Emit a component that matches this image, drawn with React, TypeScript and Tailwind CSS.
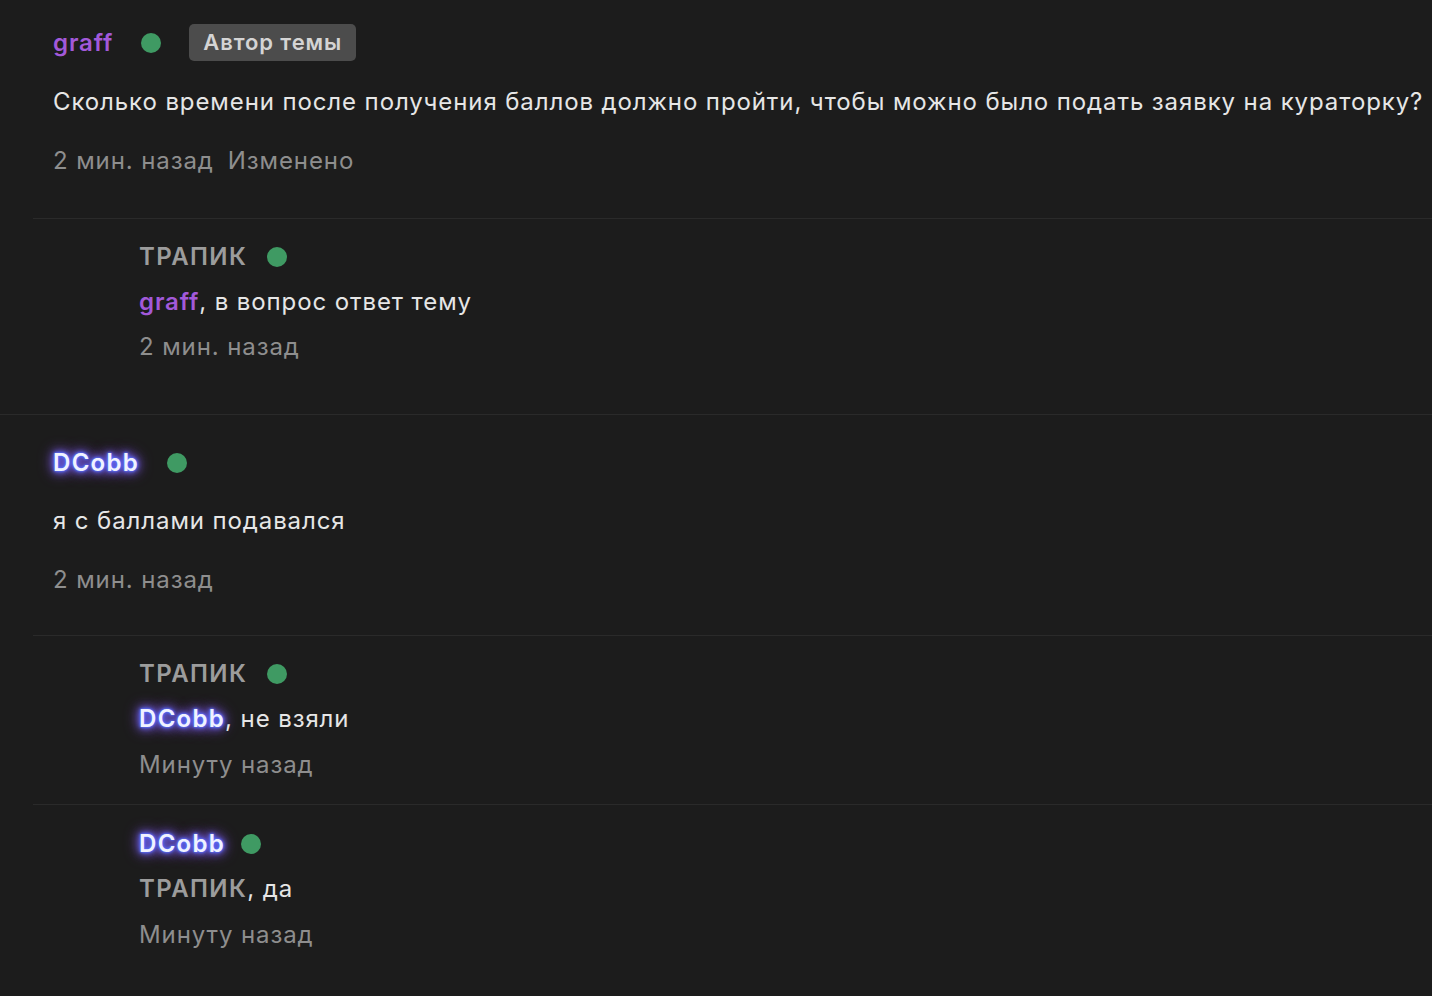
import React from "react";

const glow =
  "tracking-[1.3px] text-[#f0f2ff] [text-shadow:0_0_2px_#5870ff,0_0_3px_#5870ff,0_0_5px_#5b6cff,0_0_8px_#6a64ff,0_0_12px_#8a5cf0,0_0_16px_#9a5cf0]";

function Dot() {
  return <span className="inline-block h-5 w-5 rounded-full bg-[#3f9a63]" />;
}

function Cobb() {
  return <span className={`font-semibold ${glow}`}>DCobb</span>;
}

function Trapik() {
  return <span className="font-semibold tracking-[1.4px] text-[#9c9c9c]">ТРАПИК</span>;
}

export default function App() {
  return (
    <div
      className="min-h-[996px] w-full overflow-hidden bg-[#1c1c1c] text-[24px] tracking-[0.9px] text-[#e6e6e6]"
      style={{ fontFamily: "Inter, 'Noto Sans', sans-serif" }}
    >
      {/* post 1 */}
      <div className="pl-[33px]">
        <div className="border-b border-[#2a2a2a] pl-5 pt-[25px] pb-[41px]">
          <div className="flex h-[35px] items-center">
            <span className="font-semibold text-[#a259d9]">graff</span>
            <span className="ml-7 flex"><Dot /></span>
            <span className="ml-7 rounded-[5px] bg-[#4c4c4c] px-[14px] py-[2px] text-[22px] font-semibold text-[#d4d4d4]">
              Автор темы
            </span>
          </div>
          <div className="mt-[26px] whitespace-nowrap leading-[32px]">
            Сколько времени после получения баллов должно пройти, чтобы можно было подать заявку на кураторку?
          </div>
          <div className="mt-[27px] flex gap-[14px] leading-[32px] text-[#8e8e8e]">
            <span>2 мин. назад</span>
            <span>Изменено</span>
          </div>
        </div>
      </div>
      {/* reply 1 */}
      <div className="border-b border-[#2a2a2a] pl-[139px] pt-[22px] pb-[51px]">
        <div className="flex h-[32px] items-center gap-5">
          <Trapik />
          <Dot />
        </div>
        <div className="mt-[13px] leading-[32px]">
          <span className="font-semibold text-[#a259d9]">graff</span>, в вопрос ответ тему
        </div>
        <div className="mt-[13px] leading-[32px] text-[#8e8e8e]">2 мин. назад</div>
      </div>
      {/* post 2 */}
      <div className="pl-[33px]">
        <div className="border-b border-[#2a2a2a] pl-5 pt-[32px] pb-[39px]">
          <div className="flex h-[32px] items-center">
            <Cobb />
            <span className="ml-7 flex"><Dot /></span>
          </div>
          <div className="mt-[26px] leading-[32px]">я с баллами подавался</div>
          <div className="mt-[27px] leading-[32px] text-[#8e8e8e]">2 мин. назад</div>
        </div>
      </div>
      {/* reply 2 */}
      <div className="pl-[33px]">
        <div className="border-b border-[#2a2a2a] pl-[106px] pt-[22px] pb-[23px]">
          <div className="flex h-[32px] items-center gap-5">
            <Trapik />
            <Dot />
          </div>
          <div className="mt-[13px] leading-[32px]">
            <Cobb />, не взяли
          </div>
          <div className="mt-[14px] leading-[32px] text-[#8e8e8e]">Минуту назад</div>
        </div>
      </div>
      {/* reply 3 */}
      <div className="pl-[139px] pt-[23px] pb-[40px]">
        <div className="flex h-[32px] items-center gap-4">
          <Cobb />
          <Dot />
        </div>
        <div className="mt-[13px] leading-[32px]">
          <Trapik />, да
        </div>
        <div className="mt-[14px] leading-[32px] text-[#8e8e8e]">Минуту назад</div>
      </div>
    </div>
  );
}
